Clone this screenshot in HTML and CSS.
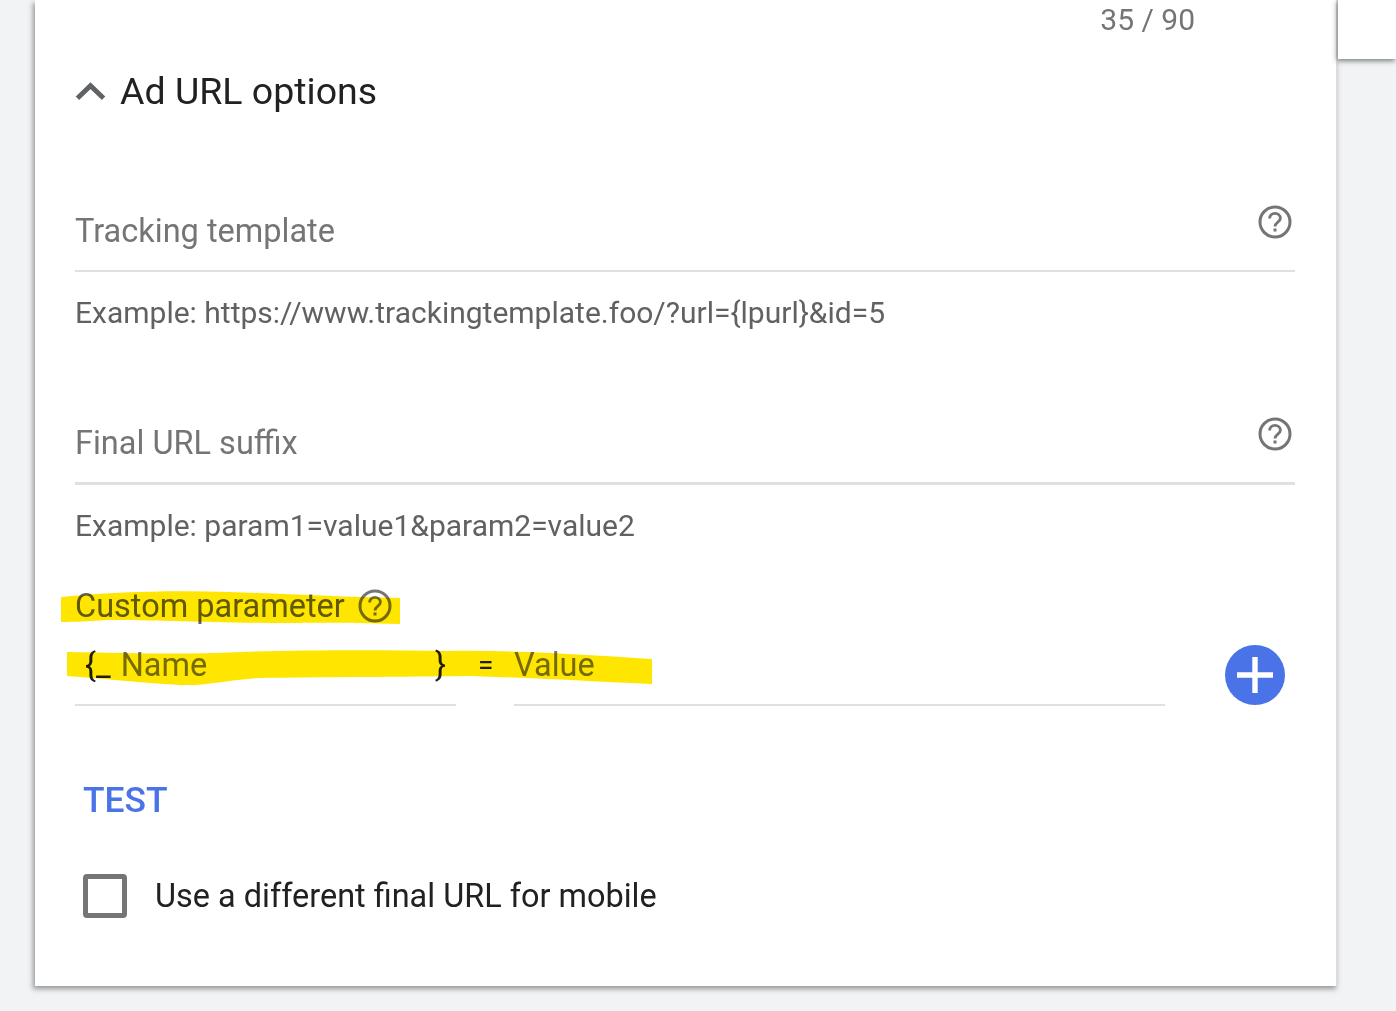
FILE: index.html
```html
<!DOCTYPE html>
<html lang="en">
<head>
<meta charset="utf-8">
<title>Ad URL options</title>
<link rel="stylesheet" href="styles.css">
</head>
<body>
<div class="page">
  <main class="card">
    <div class="counter">35 / 90</div>
    <h2 class="section-head">
      <svg class="chevron" viewBox="0 0 32 20" aria-hidden="true"><path d="M2.5 17.5 16 4.5l13.5 13" fill="none" stroke="#5f6368" stroke-width="5"/></svg>
      <span>Ad URL options</span>
    </h2>

    <div class="field field-tracking">
      <div class="field-input">
        <span class="placeholder">Tracking template</span>
        <svg class="help" viewBox="0 0 34 34" aria-hidden="true"><circle cx="17" cy="17" r="15" fill="none" stroke="#757575" stroke-width="3"/><path d="M11.6 13.6c0-3 2.4-5.2 5.4-5.2s5.4 2.100 5.400 4.900c0 3.700-5.400 4-5.400 8.200" fill="none" stroke="#757575" stroke-width="2.800"/><rect x="15.500" y="23.500" width="3" height="3" fill="#757575"/></svg>
      </div>
      <p class="hint">Example: https://www.trackingtemplate.foo/?url={lpurl}&amp;id=5</p>
    </div>

    <div class="field field-suffix">
      <div class="field-input">
        <span class="placeholder">Final URL suffix</span>
        <svg class="help" viewBox="0 0 34 34" aria-hidden="true"><circle cx="17" cy="17" r="15" fill="none" stroke="#757575" stroke-width="3"/><path d="M11.6 13.6c0-3 2.4-5.2 5.4-5.2s5.4 2.100 5.400 4.900c0 3.700-5.400 4-5.400 8.200" fill="none" stroke="#757575" stroke-width="2.800"/><rect x="15.500" y="23.500" width="3" height="3" fill="#757575"/></svg>
      </div>
      <p class="hint">Example: param1=value1&amp;param2=value2</p>
    </div>

    <div class="custom-label">
      <span>Custom parameter</span>
      <svg class="help" viewBox="0 0 34 34" aria-hidden="true"><circle cx="17" cy="17" r="15" fill="none" stroke="#757575" stroke-width="3"/><path d="M11.6 13.6c0-3 2.4-5.2 5.4-5.2s5.4 2.100 5.400 4.900c0 3.700-5.400 4-5.400 8.200" fill="none" stroke="#757575" stroke-width="2.800"/><rect x="15.500" y="23.500" width="3" height="3" fill="#757575"/></svg>
    </div>

    <div class="param-row">
      <div class="param-name">
        <span class="brace brace-open">{_</span>
        <span class="placeholder">Name</span>
        <span class="brace brace-close">}</span>
      </div>
      <span class="equals">=</span>
      <div class="param-value"><span class="placeholder">Value</span></div>
      <button class="add-btn" type="button" aria-label="Add">
        <svg viewBox="0 0 36 36" aria-hidden="true"><path d="M18 0v36M0 18h36" stroke="#fff" stroke-width="5.400" fill="none"/></svg>
      </button>
    </div>

    <div class="test">TEST</div>

    <label class="check-row">
      <span class="checkbox"></span>
      <span>Use a different final URL for mobile</span>
    </label>

    <svg class="highlight" viewBox="0 0 1396 1011" aria-hidden="true">
      <path fill="#ffe600" d="M61 597 C110 592 170 590 230 592 C290 594 340 597 400 598 L400 624 C340 622 310 623 265 623 C200 622 150 620 110 620 C90 621 75 622 61 622 Z"/>
      <path fill="#ffe600" d="M67 652 C130 653 180 655 240 652 C300 650 380 650 448 651 C520 650 590 655 652 659 L652 684 C600 682 540 678 470 676 C400 677 320 677 260 678 C230 679 210 686 180 685 C140 683 100 678 67 676 Z"/>
    </svg>
  </main>
  <aside class="side">
    <div class="side-card"></div>
  </aside>
</div>
</body>
</html>
```
FILE: styles.css
```css
* { box-sizing: border-box; }
html, body { margin: 0; padding: 0; height: 100%; overflow: hidden; }
body {
  background: #f1f3f4;
  font-family: Roboto, "Liberation Sans", sans-serif;
  color: #212121;
}
.page { display: flex; width: 1396px; height: 1011px; padding-left: 35px; align-items: flex-start; }
.card {
  position: relative;
  width: 1303px;
  height: 986px;
  padding-left: 40px;
  background: #fff;
  border-right: 2px solid #dadce0;
  box-shadow: -2px 3px 5px rgba(60, 64, 67, .5);
}
.side { position: relative; z-index: 1; flex: 1; }
.side-card {
  height: 59px;
  background: #fff;
  box-shadow: -1px 2px 5px rgba(60, 64, 67, .65);
}
.counter {
  height: 42px;
  padding-top: 2px;
  width: 1120px;
  text-align: right;
  font-size: 30px;
  line-height: 36px;
  color: #757575;
}
.section-head {
  display: flex;
  align-items: center;
  gap: 14px;
  height: 42px;
  margin: 28px 0 0;
  font-size: 37.500px;
  font-weight: 400;
  line-height: 42px;
  color: #212121;
}
.chevron { width: 31px; height: 20px; }
.field { width: 1220px; }
.field-input {
  display: flex;
  justify-content: space-between;
  height: 82px;
  border-bottom: 2px solid #e0e0e0;
  padding-right: 3px;
}
.field-tracking { margin-top: 78px; }
.field-suffix { margin-top: 69px; }
.field-suffix .field-input { height: 83px; border-bottom-width: 3px; }
.field-input .placeholder { font-size: 32.500px; line-height: 38px; padding-top: 22px; }
.field-input .help { width: 34px; height: 34px; margin-top: 15px; }
.placeholder { color: #757575; }
.hint { margin: 21px 0 0; font-size: 30px; line-height: 40px; color: #616161; white-space: nowrap; }
.custom-label {
  display: flex;
  align-items: center;
  gap: 13px;
  height: 36px;
  margin-top: 42px;
  font-size: 32.500px;
  line-height: 36px;
  color: #616161;
}
.custom-label .help { width: 34px; height: 34px; }
.param-row { display: flex; align-items: flex-start; height: 62px; margin-top: 20px; }
.param-name {
  position: relative;
  display: flex;
  width: 381px;
  height: 62px;
  border-bottom: 2px solid #e0e0e0;
  font-size: 32.500px;
  line-height: 42px;
  padding-left: 10px;
}
.brace { color: #212121; }
.brace-open { margin-right: 10px; }
.brace-close { position: absolute; left: 360px; top: 0; }
.equals { width: 58px; padding-left: 22px; font-size: 28px; line-height: 42px; color: #212121; }
.param-value { width: 651px; height: 62px; border-bottom: 2px solid #e0e0e0; font-size: 32.500px; line-height: 42px; }
.add-btn {
  display: flex;
  align-items: center;
  justify-content: center;
  width: 60px;
  height: 60px;
  margin: 1px 0 0 60px;
  padding: 0;
  border: 0;
  border-radius: 50%;
  background: #4a73e8;
}
.add-btn svg { width: 36px; height: 36px; }
.test {
  margin: 73px 0 0 8px;
  font-size: 35.400px;
  font-weight: 500;
  line-height: 42px;
  color: #4a73e8;
}
.check-row {
  display: flex;
  align-items: center;
  gap: 28px;
  margin: 52px 0 0 8px;
  font-size: 32.450px;
  line-height: 46px;
  color: #212121;
}
.checkbox {
  width: 44px;
  height: 44px;
  border: 5px solid #757575;
  border-radius: 4px;
}
.highlight {
  position: absolute;
  left: -35px;
  top: 0;
  width: 1396px;
  height: 1011px;
  pointer-events: none;
  mix-blend-mode: multiply;
}
```
